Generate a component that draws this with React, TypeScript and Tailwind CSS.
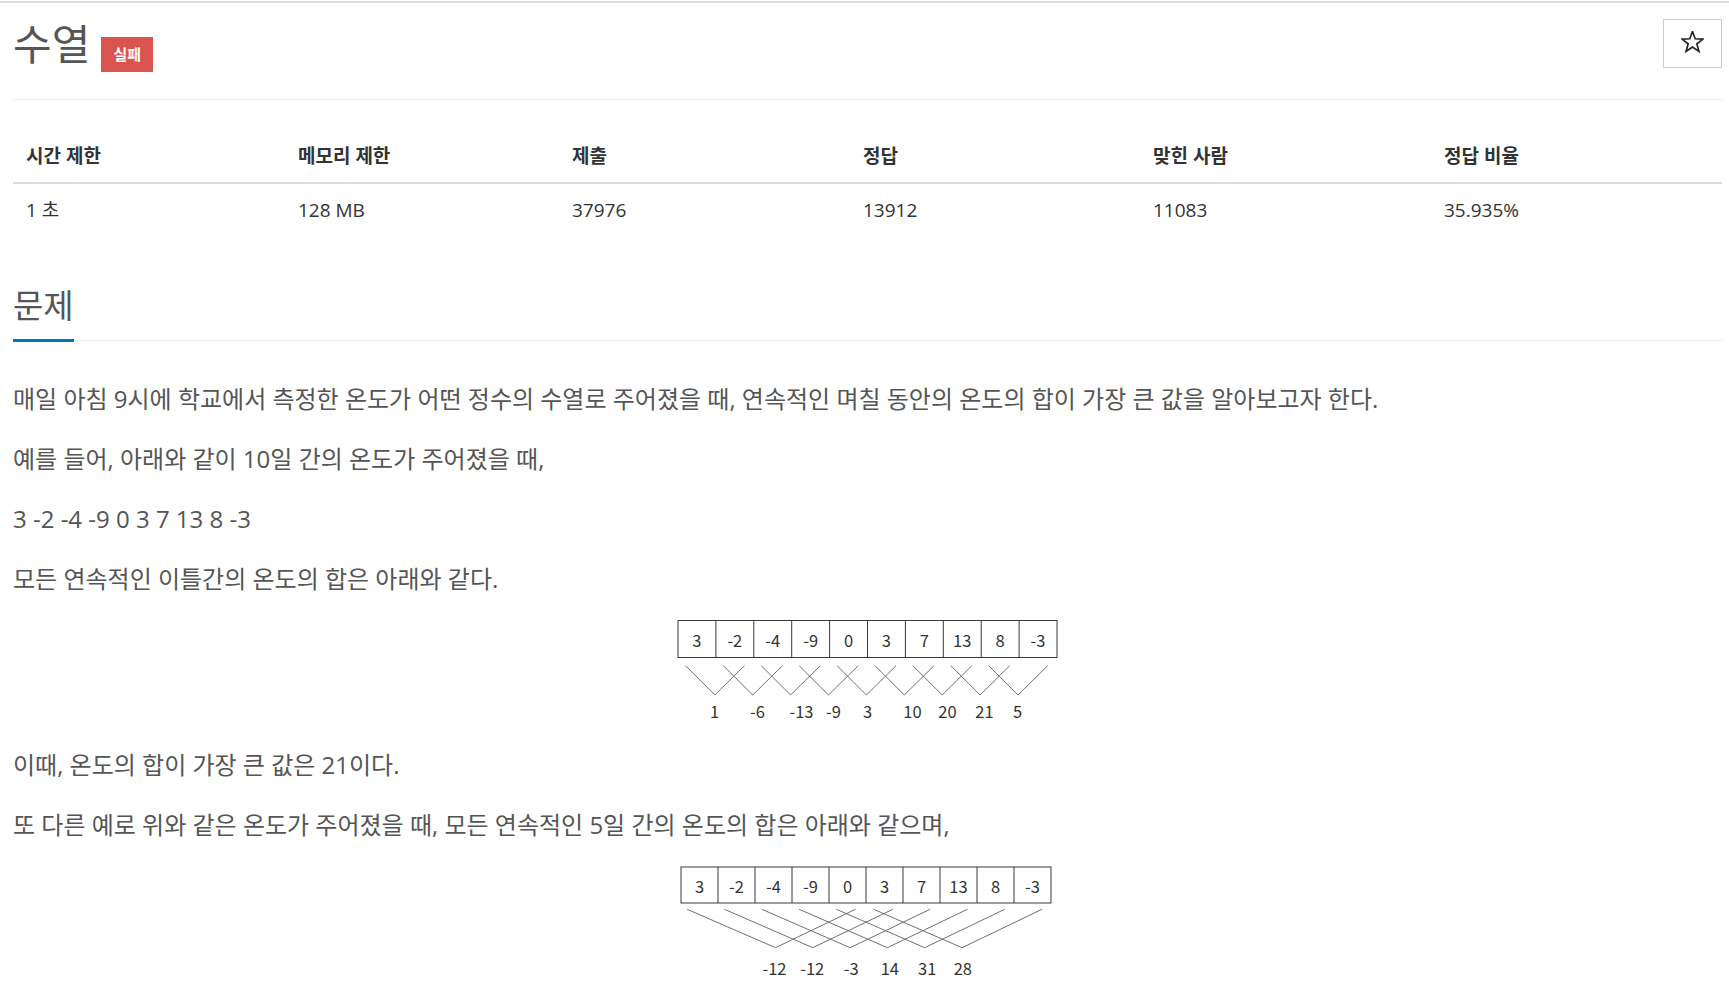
import React from "react";

const FONT = "font-['Open_Sans','Noto_Sans_CJK_KR',sans-serif]";

function StarIcon() {
  const pts: string[] = [];
  const cx = 11.5, cy = 11.5, R = 11, r = 4.6;
  for (let i = 0; i < 10; i++) {
    const a = -Math.PI / 2 + (i * Math.PI) / 5;
    const rad = i % 2 === 0 ? R : r;
    pts.push(`${(cx + rad * Math.cos(a)).toFixed(2)},${(cy + rad * Math.sin(a)).toFixed(2)}`);
  }
  return (
    <svg width="23" height="22" viewBox="0 0 23 22">
      <polygon points={pts.join(" ")} fill="none" stroke="#222" strokeWidth="1.7" strokeLinejoin="miter" />
    </svg>
  );
}

const cells = [3, -2, -4, -9, 0, 3, 7, 13, 8, -3];

function Diagram1() {
  const x0 = 677.5, w = 37.9, top = 621.5, h = 37;
  const sums = [1, -6, -13, -9, 3, 10, 20, 21, 5];
  const sx = [714, 757, 801, 833, 867, 912, 947, 984, 1017];
  return (
    <svg width="392" height="112" viewBox="671.5 621 392 112" overflow="visible">
      <rect x={x0} y={top} width={w * 10} height={h} fill="none" stroke="#3a3a3a" strokeWidth="1" />
      {cells.slice(1).map((_, i) => (
        <line key={i} x1={x0 + w * (i + 1)} x2={x0 + w * (i + 1)} y1={top} y2={top + h} stroke="#3a3a3a" strokeWidth="1" />
      ))}
      {cells.map((c, i) => (
        <text key={i} x={x0 + w * (i + 0.5)} y={641} textAnchor="middle" dominantBaseline="central" fontSize="16.5" fill="#333" fontFamily="'Noto Sans CJK KR', sans-serif">
          {c}
        </text>
      ))}
      {sums.map((_, i) => (
        <polyline key={i} points={`${685 + w * i},666.7 ${714.3 + w * i},696 ${744 + w * i},666.7`} fill="none" stroke="#707070" strokeWidth="1" />
      ))}
      {sums.map((s, i) => (
        <text key={i} x={sx[i]} y={712} textAnchor="middle" dominantBaseline="central" fontSize="16.5" fill="#333" fontFamily="'Noto Sans CJK KR', sans-serif">
          {s}
        </text>
      ))}
    </svg>
  );
}

function Diagram2() {
  const x0 = 680.5, w = 37.0, top = 867, h = 36;
  const sums = [-12, -12, -3, 14, 31, 28];
  const sx = [774, 811.7, 850.7, 889.3, 926.7, 962.3];
  const p = 37.3;
  return (
    <svg width="392" height="122" viewBox="671.5 866 392 122" overflow="visible">
      <rect x={x0} y={top} width={w * 10} height={h} fill="none" stroke="#3a3a3a" strokeWidth="1" />
      {cells.slice(1).map((_, i) => (
        <line key={i} x1={x0 + w * (i + 1)} x2={x0 + w * (i + 1)} y1={top} y2={top + h} stroke="#3a3a3a" strokeWidth="1" />
      ))}
      {cells.map((c, i) => (
        <text key={i} x={x0 + w * (i + 0.5)} y={886} textAnchor="middle" dominantBaseline="central" fontSize="16.5" fill="#333" fontFamily="'Noto Sans CJK KR', sans-serif">
          {c}
        </text>
      ))}
      {sums.map((_, i) => (
        <polyline key={i} points={`${686.7 + p * i},909.3 ${775 + p * i},947.7 ${855 + p * i},909.3`} fill="none" stroke="#707070" strokeWidth="1" />
      ))}
      {sums.map((s, i) => (
        <text key={i} x={sx[i]} y={968} textAnchor="middle" dominantBaseline="central" fontSize="16.5" fill="#333" fontFamily="'Noto Sans CJK KR', sans-serif">
          {s}
        </text>
      ))}
    </svg>
  );
}

const headers = ["시간 제한", "메모리 제한", "제출", "정답", "맞힌 사람", "정답 비율"];
const values = ["1 초", "128 MB", "37976", "13912", "11083", "35.935%"];
const colW = ["w-[272px]", "w-[274px]", "w-[291px]", "w-[290px]", "w-[291px]", "flex-1"];

export default function App() {
  return (
    <div className={`${FONT} bg-white min-h-screen`}>
      <div className="mt-px h-[2px] bg-[#dddddd]" />
      <div className="pl-[13px] pr-[7px]">
        {/* title row */}
        <div className="flex h-[97px] items-start justify-between border-b border-[#eeeeee] pt-[16px]">
          <div className="flex items-start">
            <h1 className="mt-[1px] text-[42px] leading-[48px] text-[#555555] font-normal">수열</h1>
            <span className="ml-[11px] mt-[18px] flex h-[35px] w-[52px] items-center justify-center bg-[#d9534f] text-[15px] font-bold text-white">
              실패
            </span>
          </div>
          <button className="flex h-[49px] w-[59px] items-center justify-center border border-[#cccccc] bg-white pb-[4px]">
            <StarIcon />
          </button>
        </div>

        {/* info table */}
        <div className="mt-[30px] text-[19px] text-[#333333]">
          <div className="flex h-[54px] items-center border-b-2 border-[#dddddd] font-bold">
            {headers.map((h, i) => (
              <div key={i} className={`${colW[i]} px-[13px]`}>
                {h}
              </div>
            ))}
          </div>
          <div className="flex h-[53px] items-center">
            {values.map((v, i) => (
              <div key={i} className={`${colW[i]} px-[13px]`}>
                {v}
              </div>
            ))}
          </div>
        </div>

        {/* headline */}
        <div className="mt-[49px] flex border-b border-dotted border-[#cfe0ee]">
          <h2 className="-mb-[2px] border-b-[3px] border-[#0076c0] pb-[13px] text-[33px] leading-[40px] font-normal text-[#555555]">
            문제
          </h2>
        </div>

        {/* description */}
        <div className="mt-[39px] text-[24px] leading-[37.5px] text-[#555555]">
          <p className="mb-[22.5px]">
            매일 아침 9시에 학교에서 측정한 온도가 어떤 정수의 수열로 주어졌을 때, 연속적인 며칠 동안의 온도의 합이 가장 큰 값을 알아보고자 한다.
          </p>
          <p className="mb-[22.5px]">예를 들어, 아래와 같이 10일 간의 온도가 주어졌을 때,</p>
          <p className="mb-[22.5px]">3 -2 -4 -9 0 3 7 13 8 -3</p>
          <p className="mb-[22.5px]">모든 연속적인 이틀간의 온도의 합은 아래와 같다.</p>
          <div className="mb-[22.5px] flex h-[103px] justify-center">
            <Diagram1 />
          </div>
          <p className="mb-[22.5px]">이때, 온도의 합이 가장 큰 값은 21이다.</p>
          <p className="mb-[22.5px]">또 다른 예로 위와 같은 온도가 주어졌을 때, 모든 연속적인 5일 간의 온도의 합은 아래와 같으며,</p>
          <div className="mb-[22.5px] flex h-[122px] justify-center">
            <Diagram2 />
          </div>
        </div>
      </div>
    </div>
  );
}
